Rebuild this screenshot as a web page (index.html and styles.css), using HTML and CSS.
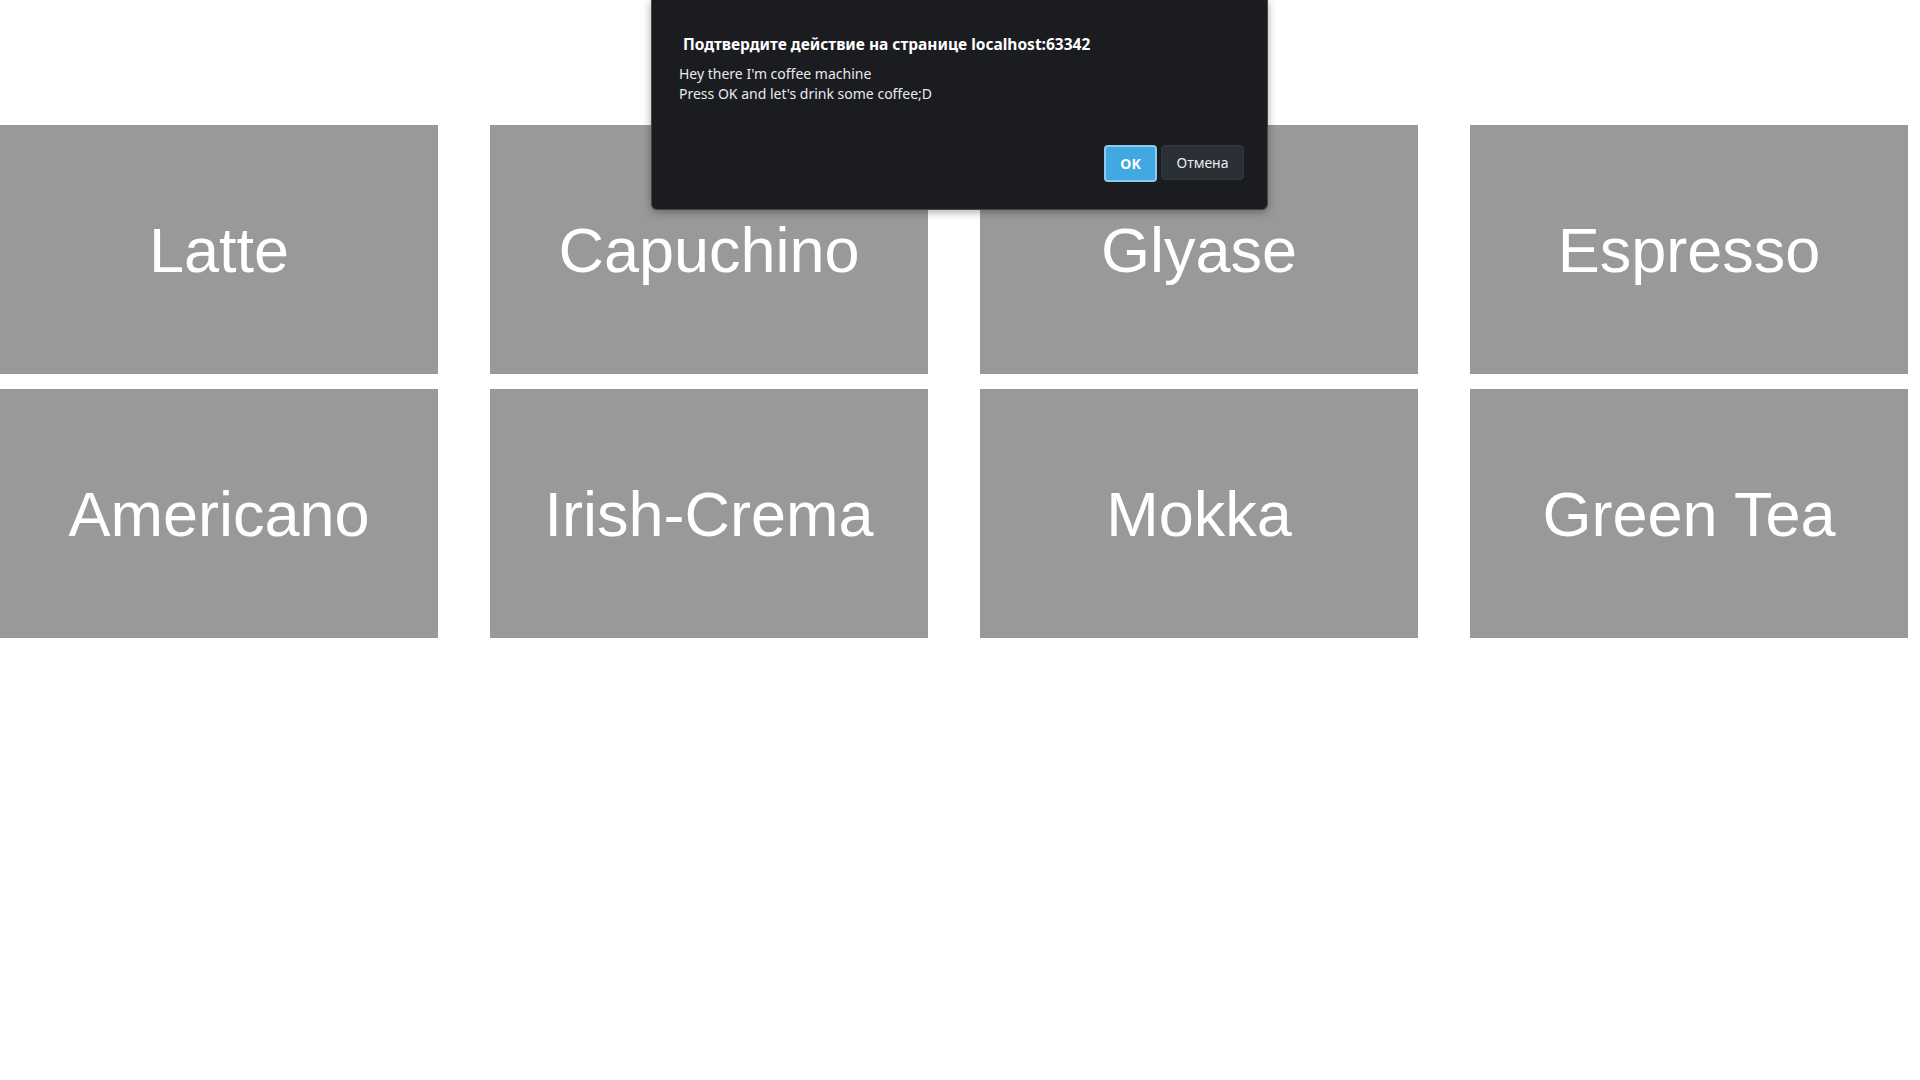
FILE: index.html
```html
<!DOCTYPE html>
<html lang="ru">
<head>
    <meta charset="UTF-8">
    <meta name="viewport" content="width=device-width, initial-scale=1.0">
    <title>Coffee machine</title>
    <link rel="stylesheet" href="styles.css">
</head>
<body>
    <!-- Menu -->
    <div class="menu">
        <div class="drink">Latte</div>
        <div class="drink">Capuchino</div>
        <div class="drink">Glyase</div>
        <div class="drink">Espresso</div>
        <div class="drink">Americano</div>
        <div class="drink">Irish-Crema</div>
        <div class="drink">Mokka</div>
        <div class="drink">Green Tea</div>
    </div>

    <!-- Confirm dialog -->
    <div class="dialog">
        <div class="dialog-title">Подтвердите действие на странице localhost:63342</div>
        <div class="dialog-text">
            <p>Hey there I'm coffee machine</p>
            <p>Press OK and let's drink some coffee;D</p>
        </div>
        <div class="dialog-buttons">
            <button class="btn btn-ok">OK</button>
            <button class="btn btn-cancel">Отмена</button>
        </div>
    </div>
</body>
</html>
```

FILE: styles.css
```css
html, body { margin: 0; padding: 0; background: #fff; font-family: "Liberation Sans", Arial, sans-serif; }

.menu { display: grid; grid-template-columns: repeat(4, 438px); column-gap: 52px; row-gap: 15px; padding-top: 125px; }
.drink { height: 249px; background: #999; color: #fff; font-size: 63px; display: flex; justify-content: center; align-items: center; }

.dialog { position: absolute; top: 0; left: 651px; width: 617px; height: 210px; box-sizing: border-box; padding: 34px 23px 0 27px; background: #1b1c20; border: 1px solid #45474c; border-top: none; border-radius: 0 0 6px 6px; box-shadow: 0 2px 8px rgba(0,0,0,0.35); color: #e8eaed; font-family: "Noto Sans", "Open Sans", sans-serif; }
.dialog-title { font-size: 15.5px; font-weight: bold; color: #fff; margin-left: 4px; line-height: 20px; }
.dialog-text { margin-top: 10px; font-size: 14px; line-height: 20px; }
.dialog-text p { margin: 0; }
.dialog-buttons { display: flex; justify-content: flex-end; gap: 4px; margin-top: 41px; }
.btn { font-family: "Noto Sans", sans-serif; font-size: 14px; border-radius: 4px; cursor: pointer; height: 35px; }
.btn-ok { width: 53px; height: 37px; background: #41a8e2; color: #fff; font-weight: bold; border: 2px solid #8ccbef; }
.btn-cancel { width: 83px; background: #2b3036; color: #e8eaed; border: 1px solid #33383e; }
```
